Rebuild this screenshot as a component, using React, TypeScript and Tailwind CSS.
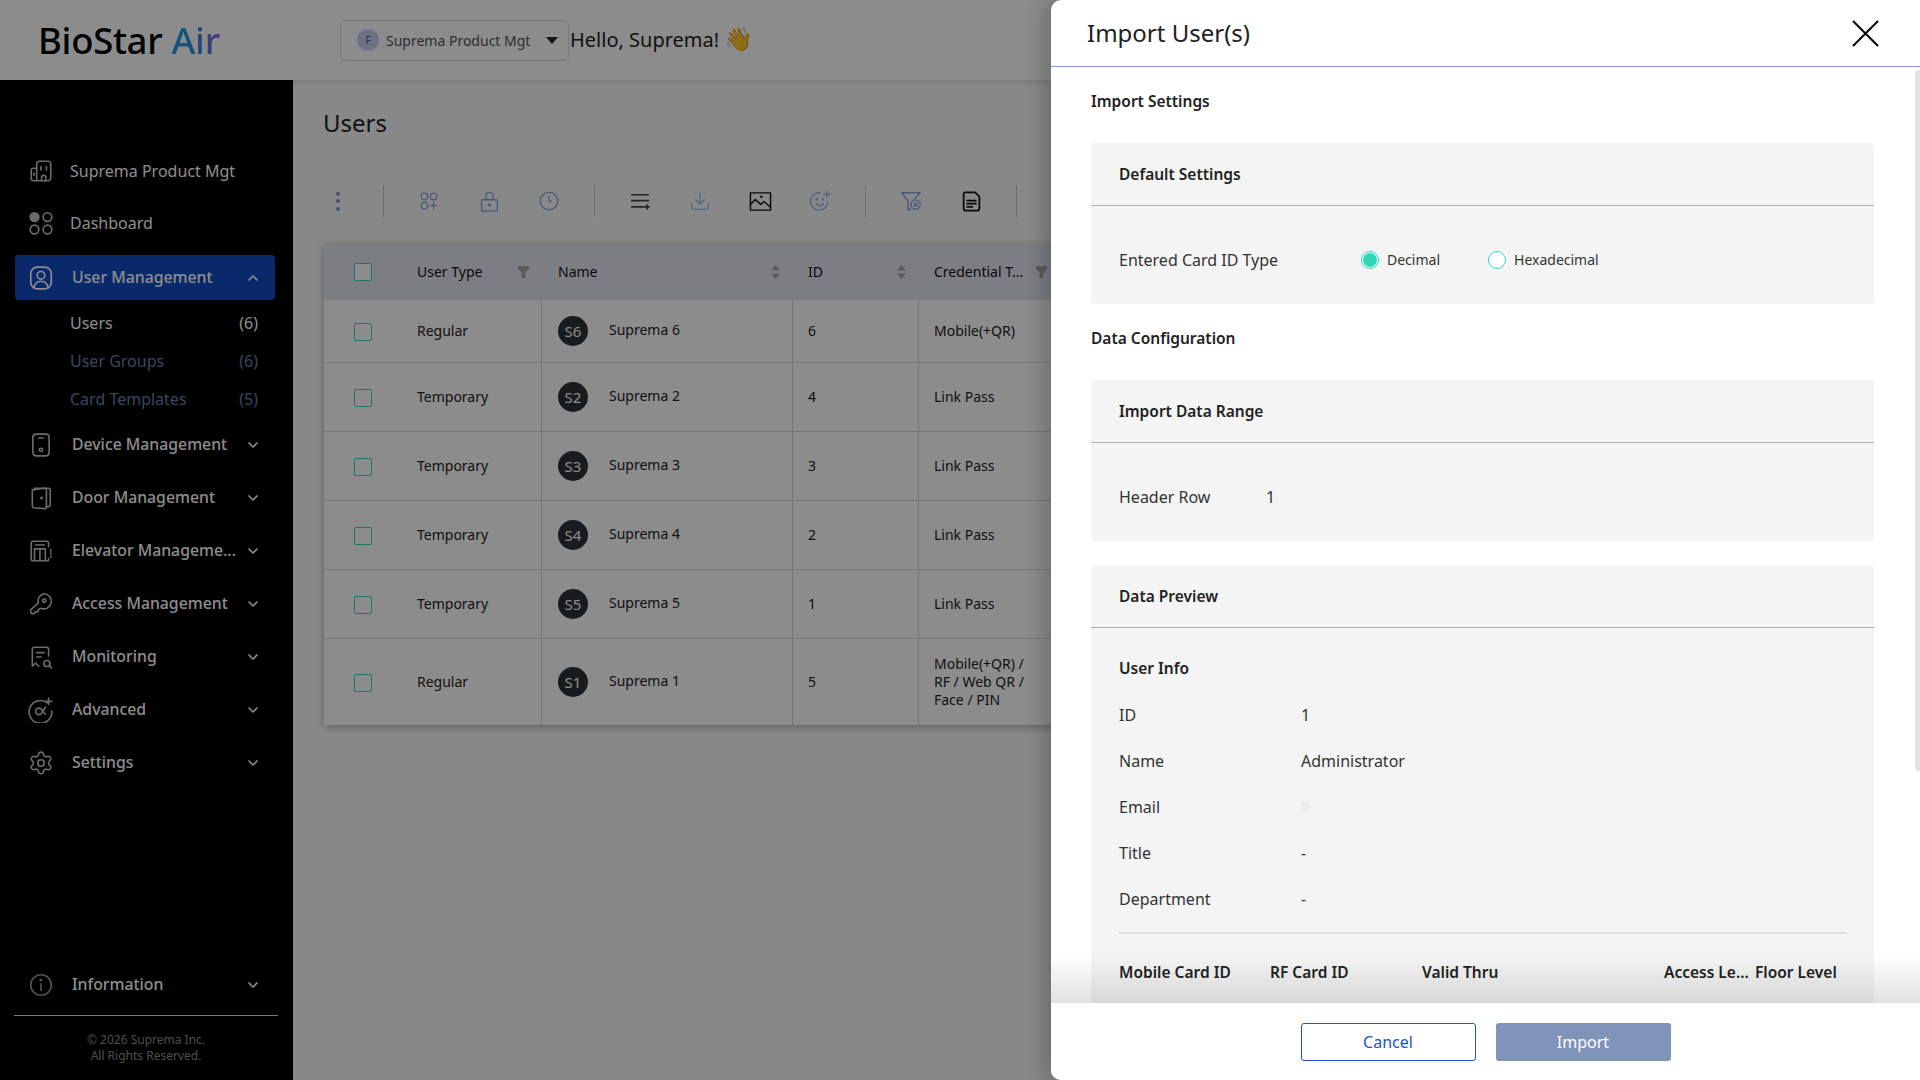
import React from 'react';
import { Settings, ChevronDown, ChevronUp } from 'lucide-react';

type IconProps = { className?: string };

const line = { fill: 'none', stroke: 'currentColor', strokeWidth: 1.5, strokeLinecap: 'round', strokeLinejoin: 'round' } as const;

const Svg: React.FC<{ size?: number; className?: string; children: React.ReactNode }> = ({ size = 26, className, children }) => (
  <svg width={size} height={size} viewBox="0 0 24 24" className={className} {...line}>
    {children}
  </svg>
);

// sidebar icons
const BuildingIcon = () => (
  <Svg>
    <path d="M8 21V5.500A2.500 2.500 0 0 1 10.500 3h8A2.500 2.500 0 0 1 21 5.500V18.500A2.500 2.500 0 0 1 18.500 21Z" />
    <path d="M8 9.500H5A2 2 0 0 0 3 11.500V19a2 2 0 0 0 2 2h3" />
    <path d="M12 8v3M17 8v3M5.500 14v2M12.500 21v-3a2 2 0 0 1 4 0v3" />
  </Svg>
);
const DashboardIcon = () => (
  <Svg>
    <circle cx="6" cy="6.500" r="4" fill="currentColor" />
    <circle cx="18" cy="6.500" r="4" />
    <circle cx="6" cy="18" r="4" />
    <circle cx="18" cy="18" r="4" />
  </Svg>
);
const UserBoxIcon = () => (
  <Svg>
    <rect x="2.500" y="2" width="19" height="20" rx="6" />
    <circle cx="12" cy="9.500" r="3.500" />
    <path d="M5.500 21.500c0-4 3-6.500 6.500-6.500s6.500 2.500 6.500 6.500" />
  </Svg>
);
const DeviceIcon = () => (
  <Svg>
    <rect x="4.500" y="2" width="15" height="20" rx="3" />
    <path d="M10 5.500h4" />
    <circle cx="12" cy="16.500" r="1.500" />
  </Svg>
);
const DoorIcon = () => (
  <Svg>
    <path d="M6 3h13a1.500 1.500 0 0 1 1.500 1.500v14a1.500 1.500 0 0 1-1.500 1.500h-2" />
    <path d="M4 4.500 15 3a2 2 0 0 1 2 2v15.500a1.500 1.500 0 0 1-2 1.300L5 21a1.500 1.500 0 0 1-1-1.500Z" />
    <circle cx="12.500" cy="12" r=".6" fill="currentColor" />
  </Svg>
);
const ElevatorIcon = () => (
  <Svg>
    <path d="M19 8V5a2 2 0 0 0-2-2H5a2 2 0 0 0-2 2v15a1 1 0 0 0 1 1h14a1 1 0 0 0 1-1v-1" />
    <path d="M7 6.500h8M6 21V10h10v11M11 10v11M21 11v1M21 14v1M21 17v1" />
  </Svg>
);
const KeyIcon = () => (
  <Svg>
    <path d="M14.500 2.500a7 7 0 1 1-2.500 13.500l-2 1-1 2-2.500.5-1 1.500H3.500l-1-1.500v-2l7-6.500a7 7 0 0 1 5-8.500Z" />
    <circle cx="15" cy="9" r="1.500" />
  </Svg>
);
const MonitorIcon = () => (
  <Svg>
    <path d="M19 11V5a2 2 0 0 0-2-2H6a2 2 0 0 0-2 2v15.500l3-3 3 3" />
    <path d="M8 8h7M8 12h4" />
    <circle cx="17.500" cy="18" r="2.800" />
    <path d="m19.700 20.200 2 1.800" />
  </Svg>
);
const AdvancedIcon = () => (
  <Svg>
    <path d="M18 5.500A10.500 10.500 0 1 0 22 13" />
    <path d="M16 9.500 12.500 15a3 3 0 1 1 0-3.500l3.500 4.500M19 1v6M16 4h6" />
  </Svg>
);
const InfoIcon = () => (
  <Svg className="text-[#9a9a9a]">
    <circle cx="12" cy="12" r="9.500" />
    <path d="M12 11v6" />
    <circle cx="12" cy="7.500" r=".6" fill="currentColor" />
  </Svg>
);

// toolbar icons
const GroupAddIcon = () => (
  <Svg size={20}>
    <circle cx="6.500" cy="6.500" r="4" />
    <circle cx="17.500" cy="6.500" r="4" />
    <circle cx="6.500" cy="17.500" r="4" />
    <path d="M17.500 13.500v8M13.500 17.500h8" />
  </Svg>
);
const LockIcon = () => (
  <Svg size={21}>
    <rect x="3" y="10" width="18" height="13" rx="1" />
    <path d="M8 10V5.500a4 4 0 0 1 8 0V10" />
    <circle cx="12" cy="16" r="1" fill="currentColor" />
  </Svg>
);
const ClockIcon = () => (
  <Svg size={20}>
    <circle cx="12" cy="12" r="10.500" />
    <path d="M12 6.500V12h3" />
  </Svg>
);
const ListPlusIcon = () => (
  <Svg size={20}>
    <path d="M2 4.500h20M2 11.500h20M2 19h15M20.500 16.500v5M18 19h5" strokeWidth="2" />
  </Svg>
);
const DownloadIcon = () => (
  <Svg size={20}>
    <path d="M12 1.500V15M7 10.500l5 5 5-5M2 15v5.500A1.500 1.500 0 0 0 3.500 22h17a1.500 1.500 0 0 0 1.500-1.500V15" />
  </Svg>
);
const ImageIcon = () => (
  <Svg size={23}>
    <rect x="1.500" y="3" width="21" height="18" />
    <path d="m1.500 15 5-5 6 5 3-3 7 6" />
    <circle cx="13" cy="7" r=".6" fill="currentColor" />
  </Svg>
);
const SmilePlusIcon = () => (
  <Svg size={22}>
    <path d="M20.500 13A9.500 9.500 0 1 1 12 3" />
    <path d="M8 15c2 2.500 6 2.500 8 0" />
    <circle cx="8.500" cy="10" r=".6" fill="currentColor" />
    <circle cx="15" cy="10" r=".6" fill="currentColor" />
    <path d="M19.500 1v7M16 4.500h7" />
  </Svg>
);
const FilterOffIcon = () => (
  <Svg size={22}>
    <path d="M2 3h20l-6.500 7.500M2 3l7 9.500V22l2.500-1.500" />
    <circle cx="17" cy="16" r="5" />
    <path d="m15.300 14.300 3.400 3.400M18.700 14.300l-3.400 3.400" />
  </Svg>
);
const DocIcon = () => (
  <Svg size={21}>
    <path d="M5 1.500h11l5 5V20a2.500 2.500 0 0 1-2.500 2.500h-13A2.500 2.500 0 0 1 3 20V3.500a2 2 0 0 1 2-2Z" strokeWidth="2" />
    <path d="M7 11h10M7 14.500h10M7 18h6" strokeWidth="2" />
  </Svg>
);

const FilterGlyph = () => (
  <svg width="11" height="12" viewBox="0 0 11 12" className="shrink-0">
    <path d="M0 0h11v3L7.500 6.500V12h-4V6.500L0 3Z" fill="#a8a8a8" />
  </svg>
);
const SortGlyph = () => (
  <svg width="9" height="14" viewBox="0 0 9 14" className="shrink-0">
    <path d="M4.500 0 9 5.500H0ZM4.500 14 0 8.500h9Z" fill="#a8a8a8" />
  </svg>
);

const Checkbox = ({ className = '' }: IconProps) => (
  <span className={`block w-[18px] h-[18px] rounded-[2px] border border-[#34dcba] bg-white shrink-0 ${className}`} />
);

const ToolSep = ({ className = '' }: IconProps) => <span className={`block w-px h-[32px] bg-[#c8c8d0] mx-[15px] shrink-0 ${className}`} />;

const Tool: React.FC<{ tone: string; children: React.ReactNode }> = ({ tone, children }) => (
  <span className={`flex items-center justify-center w-[60px] shrink-0 ${tone}`}>{children}</span>
);

const SideItem: React.FC<{ icon: React.ReactNode; label: string }> = ({ icon, label }) => (
  <div className="flex items-center h-[53px] pl-[13px] pr-[14px] text-[15.8px] text-white">
    <span className="w-[26px] shrink-0 text-[#c4c4c4]">{icon}</span>
    <span className="ml-[18px] flex-1 font-medium whitespace-nowrap">{label}</span>
    <ChevronDown size={16} strokeWidth={2.5} className="shrink-0" />
  </div>
);

const SubItem: React.FC<{ label: string; count: number; active?: boolean }> = ({ label, count, active }) => (
  <div className={`flex items-center justify-between h-[38px] pl-[55px] pr-[17px] text-[16px] ${active ? 'text-white' : 'text-[#6a80ad]'}`}>
    <span>{label}</span>
    <span>({count})</span>
  </div>
);

const rows = [
  { type: 'Regular', initials: 'S6', name: 'Suprema 6', id: '6', cred: ['Mobile(+QR)'], h: 'h-[63px]' },
  { type: 'Temporary', initials: 'S2', name: 'Suprema 2', id: '4', cred: ['Link Pass'], h: 'h-[69px]' },
  { type: 'Temporary', initials: 'S3', name: 'Suprema 3', id: '3', cred: ['Link Pass'], h: 'h-[69px]' },
  { type: 'Temporary', initials: 'S4', name: 'Suprema 4', id: '2', cred: ['Link Pass'], h: 'h-[69px]' },
  { type: 'Temporary', initials: 'S5', name: 'Suprema 5', id: '1', cred: ['Link Pass'], h: 'h-[69px]' },
  { type: 'Regular', initials: 'S1', name: 'Suprema 1', id: '5', cred: ['Mobile(+QR) /', 'RF / Web QR /', 'Face / PIN'], h: 'h-[86px]' },
];

const PanelCard: React.FC<{ title: string; className?: string; children: React.ReactNode }> = ({ title, className = '', children }) => (
  <section className={`flow-root bg-[#f4f4f4] rounded-[4px] ${className}`}>
    <h3 className="flex items-center h-[63px] pt-[2px] pl-[28px] border-b border-[#b0b0b0] text-[15.5px] font-semibold text-[#222]">{title}</h3>
    {children}
  </section>
);

const Radio: React.FC<{ label: string; checked?: boolean; className?: string }> = ({ label, checked, className = '' }) => (
  <span className={`flex items-center gap-[8px] text-[14px] text-[#333] ${className}`}>
    <span className="flex items-center justify-center w-[18px] h-[18px] rounded-full border border-[#2fd9bb] bg-white">
      {checked && <span className="block w-[14px] h-[14px] rounded-full bg-[#2fd6b8]" />}
    </span>
    <span className="-mt-px">{label}</span>
  </span>
);

const userInfo = [
  ['ID', '1'],
  ['Name', 'Administrator'],
  ['Email', ''],
  ['Title', '-'],
  ['Department', '-'],
];

export default function App() {
  return (
    <div className="relative w-[1920px] h-[1080px] overflow-hidden bg-[#f8f8f8] font-['Noto_Sans',sans-serif] text-[#222]">
      <header className="flex items-center h-[80px] bg-white shadow-[0_2px_6px_rgba(0,0,0,0.12)] relative">
        <div className="w-[340px] pl-[38px] text-[36.5px] font-medium tracking-[-0.3px] text-black leading-none">
          BioStar{' '}
          <span className="bg-linear-to-r from-[#1f9ee8] via-[#2f8fe0] to-[#8a50e0] bg-clip-text text-transparent">Air</span>
        </div>
        <div className="flex items-center w-[229px] h-[41px] border border-[#dcdcdc] rounded-[6px] pl-[16px]">
          <span className="flex items-center justify-center w-[22px] h-[22px] rounded-full bg-[#c6d2ee] text-[10px] text-[#3c5ca8]">F</span>
          <span className="ml-[7px] text-[14px] text-[#555]">Suprema Product Mgt</span>
          <svg width="12" height="7" viewBox="0 0 12 7" className="ml-[16px]">
            <path d="M0 0h12L6 7Z" fill="#222" />
          </svg>
        </div>
        <div className="ml-px text-[20px] text-[#222]">
          Hello, Suprema! <span className="text-[23px] leading-none">👋</span>
        </div>
      </header>

      <div className="flex h-[1000px]">
        <aside className="flex flex-col w-[293px] shrink-0 bg-black pl-[15px] pr-[18px] pt-[65px] text-white">
          <div className="flex items-center h-[52px] pl-[13px] text-[16px]">
            <span className="w-[26px] text-[#c4c4c4]"><BuildingIcon /></span>
            <span className="ml-[16px]">Suprema Product Mgt</span>
          </div>
          <div className="flex items-center h-[52px] pl-[13px] text-[16px]">
            <span className="w-[26px] text-[#c4c4c4]"><DashboardIcon /></span>
            <span className="ml-[16px]">Dashboard</span>
          </div>
          <div className="flex items-center h-[45px] mt-[6px] pl-[13px] pr-[14px] rounded-[4px] bg-[#114cc4] text-[15.8px]">
            <span className="w-[26px]"><UserBoxIcon /></span>
            <span className="ml-[18px] flex-1 font-medium">User Management</span>
            <ChevronUp size={16} strokeWidth={2.5} className="mt-px" />
          </div>
          <div className="mt-[4px]">
            <SubItem label="Users" count={6} active />
            <SubItem label="User Groups" count={6} />
            <SubItem label="Card Templates" count={5} />
          </div>
          <SideItem icon={<DeviceIcon />} label="Device Management" />
          <SideItem icon={<DoorIcon />} label="Door Management" />
          <SideItem icon={<ElevatorIcon />} label="Elevator Manageme..." />
          <SideItem icon={<KeyIcon />} label="Access Management" />
          <SideItem icon={<MonitorIcon />} label="Monitoring" />
          <SideItem icon={<AdvancedIcon />} label="Advanced" />
          <SideItem icon={<Settings size={26} strokeWidth={1.5} />} label="Settings" />
          <div className="mt-auto">
            <SideItem icon={<InfoIcon />} label="Information" />
          </div>
          <div className="mt-[4px] -ml-px -mr-[3px] border-t border-[#dcdcdc] pt-[16px] pb-[16px] text-center text-[12px] leading-[16px] text-[#8f8f8f]">
            © 2026 Suprema Inc.
            <br />
            All Rights Reserved.
          </div>
        </aside>

        <main className="flex-1 min-w-0 pl-[30px] overflow-hidden">
          <h1 className="mt-[27px] text-[24px] leading-[32px] text-[#222]">Users</h1>
          <div className="flex items-center h-[32px] mt-[46px]">
            <span className="flex flex-col items-center gap-[3.5px] w-[30px] mr-[15px] shrink-0">
              <span className="block w-[4px] h-[4px] rounded-full bg-[#7b93cc]" />
              <span className="block w-[4px] h-[4px] rounded-full bg-[#7b93cc]" />
              <span className="block w-[4px] h-[4px] rounded-full bg-[#7b93cc]" />
            </span>
            <ToolSep />
            <Tool tone="text-[#86a3e5]"><GroupAddIcon /></Tool>
            <Tool tone="text-[#86a3e5]"><LockIcon /></Tool>
            <Tool tone="text-[#86a3e5]"><ClockIcon /></Tool>
            <ToolSep />
            <Tool tone="text-[#444]"><ListPlusIcon /></Tool>
            <Tool tone="text-[#98b4ee]"><DownloadIcon /></Tool>
            <Tool tone="text-[#111]"><ImageIcon /></Tool>
            <Tool tone="text-[#98b4ee]"><SmilePlusIcon /></Tool>
            <ToolSep />
            <Tool tone="text-[#86a3e5]"><FilterOffIcon /></Tool>
            <Tool tone="text-[#111]"><DocIcon /></Tool>
            <ToolSep />
          </div>

          <div className="w-[860px] ml-px mt-[27px] bg-white shadow-[0_2px_8px_rgba(0,0,0,0.3)] text-[14px]">
            <div className="flex items-center h-[56px] bg-[#e2e5f0] text-[#111]">
              <div className="flex items-center w-[218px] shrink-0 pl-[30px]">
                <Checkbox />
                <span className="ml-[45px] -mt-[2px]">User Type</span>
                <span className="ml-[36px]"><FilterGlyph /></span>
              </div>
              <div className="flex items-center justify-between w-[251px] shrink-0 pl-[16px] pr-[13px]">
                <span className="-mt-[2px]">Name</span>
                <SortGlyph />
              </div>
              <div className="flex items-center justify-between w-[126px] shrink-0 pl-[15px] pr-[13px]">
                <span className="-mt-[2px]">ID</span>
                <SortGlyph />
              </div>
              <div className="flex items-center w-[123px] shrink-0 pl-[15px]">
                <span className="-mt-[2px] whitespace-nowrap">Credential T...</span>
                <span className="ml-[13px]"><FilterGlyph /></span>
              </div>
            </div>
            {rows.map((row, i) => (
              <div key={row.initials} className={`flex ${row.h} ${i < rows.length - 1 ? 'border-b border-[#d8d8d8]' : ''} text-[#222]`}>
                <div className="flex items-center w-[218px] shrink-0 pl-[30px] border-r border-[#d8d8d8]">
                  <Checkbox className="mt-px" />
                  <span className="ml-[45px] -mt-px">{row.type}</span>
                </div>
                <div className="flex items-center w-[251px] shrink-0 pl-[16px] border-r border-[#d8d8d8]">
                  <span className="flex items-center justify-center w-[30px] h-[30px] rounded-full bg-[#2f3337] text-[15px] text-white">{row.initials}</span>
                  <span className="ml-[21px] -mt-[3px]">{row.name}</span>
                </div>
                <div className="flex items-center w-[126px] shrink-0 pl-[15px] border-r border-[#d8d8d8]">
                  <span className="-mt-px">{row.id}</span>
                </div>
                <div className="flex flex-col justify-center pl-[15px] leading-[18px]">
                  {row.cred.map((c) => (
                    <span key={c}>{c}</span>
                  ))}
                </div>
              </div>
            ))}
          </div>
        </main>
      </div>

      {/* dim layer behind the drawer */}
      <div className="absolute inset-0 bg-black/45" />

      <aside className="absolute top-0 right-0 flex flex-col w-[869px] h-[1080px] bg-white rounded-l-[10px] shadow-[-8px_0_20px_rgba(0,0,0,0.2)]">
        <div className="flex items-center justify-between h-[67px] shrink-0 pl-[36px] pr-[41px] border-b border-[#7f9cd6]">
          <h2 className="text-[24px] text-[#222]">Import User(s)</h2>
          <svg width="27" height="27" viewBox="0 0 27 27">
            <path d="M1 1 26 26M26 1 1 26" stroke="#000" strokeWidth="2" fill="none" />
          </svg>
        </div>

        <div className="relative flex-1 min-h-0 overflow-hidden pl-[40px] pr-[46px]">
          <h3 className="mt-[22px] h-[24px] leading-[24px] text-[15.5px] font-semibold text-[#222]">Import Settings</h3>
          <PanelCard title="Default Settings" className="mt-[30px]">
            <div className="flex items-center h-[24px] mt-[42px] mb-[32px] pl-[28px] text-[16px] text-[#333]">
              <span className="w-[242px]">Entered Card ID Type</span>
              <Radio label="Decimal" checked />
              <Radio label="Hexadecimal" className="ml-[48px]" />
            </div>
          </PanelCard>
          <h3 className="mt-[22px] h-[24px] leading-[24px] text-[15.5px] font-semibold text-[#222]">Data Configuration</h3>
          <PanelCard title="Import Data Range" className="mt-[30px]">
            <div className="flex items-center h-[24px] mt-[42px] mb-[32px] pl-[28px] text-[16px] text-[#333]">
              <span className="w-[147px]">Header Row</span>
              <span>1</span>
            </div>
          </PanelCard>
          <PanelCard title="Data Preview" className="mt-[24px]">
            <div className="pl-[28px] pr-[27px] pt-[28px] text-[16px] text-[#333]">
              <h4 className="h-[24px] leading-[24px] text-[15.5px] font-semibold text-[#222]">User Info</h4>
              <dl className="mt-[12px]">
                {userInfo.map(([k, v]) => (
                  <div key={k} className="flex items-center h-[46px]">
                    <dt className="w-[182px]">{k}</dt>
                    <dd>
                      {v || <span className="block w-[8px] h-[10px] rounded-sm bg-[#ececec]" />}
                    </dd>
                  </div>
                ))}
              </dl>
              <div className="mt-[10px] h-[2px] bg-[#e4e0e0]" />
              <div className="flex items-center h-[24px] mt-[27px] mb-[39px] text-[15.5px] font-semibold text-[#222]">
                <span className="w-[151px]">Mobile Card ID</span>
                <span className="w-[152px]">RF Card ID</span>
                <span className="w-[242px]">Valid Thru</span>
                <span className="w-[91px] whitespace-nowrap">Access Le...</span>
                <span>Floor Level</span>
              </div>
            </div>
          </PanelCard>
          <div className="absolute left-0 right-0 bottom-0 h-[48px] bg-linear-to-b from-black/0 to-black/12" />
          <div className="absolute right-0 top-[3px] w-[5px] h-[701px] rounded-l-[3px] bg-[#e4e4e4]" />
        </div>

        <div className="relative flex justify-center gap-[20px] h-[77px] shrink-0 pt-[20px] bg-white rounded-bl-[10px] text-[16px]">
          <button className="w-[175px] h-[38px] rounded-[3px] border border-[#1a56c4] text-[#1a56c4]">Cancel</button>
          <button className="w-[175px] h-[38px] rounded-[3px] bg-[#8093b8] text-white">Import</button>
        </div>
      </aside>
    </div>
  );
}
